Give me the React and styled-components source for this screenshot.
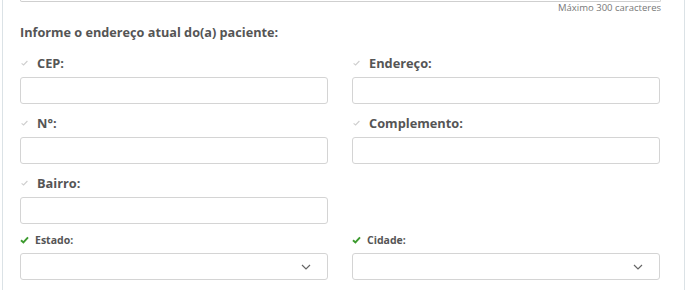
import React from 'react';
import styled, {createGlobalStyle} from 'styled-components';

const GlobalStyle = createGlobalStyle`
    html, body {margin: 0; padding: 0; background: #fff;}
    body {font-family: "Open Sans", "Liberation Sans", sans-serif;}
    * {box-sizing: border-box;}
`;

const Panel = styled.div`
    margin-left: 2px;
    width: 683px;
    height: 290px;
    border-left: 1px solid #dbe2e6;
    border-right: 1px solid #dbe2e6;
    padding: 0 23px 0 17px;
    overflow: hidden;
`;

const TextareaTail = styled.div`
    height: 2px;
    border: 1px solid #cfcfcf;
    border-top: none;
    border-radius: 0 0 4px 4px;
`;

const Counter = styled.div`
    text-align: right;
    font-size: 9.5px;
    line-height: 12px;
    color: #777;
`;

const Heading = styled.h5`
    margin: 8px 0 11px;
    font-size: 12.7px;
    line-height: 20px;
    font-weight: 700;
    color: #555;
`;

const Grid = styled.div`
    display: grid;
    grid-template-columns: 308px 308px;
    column-gap: 24px;
`;

const Field = styled.div`
    margin-bottom: 9px;
`;

const Label = styled.label`
    display: flex;
    align-items: center;
    gap: ${p => p.small ? '6px' : '9px'};
    margin-bottom: ${p => p.small ? '6px' : '4px'};
    padding-left: ${p => p.small ? '0' : '1px'};
    font-size: ${p => p.small ? '10.5px' : '12.8px'};
    line-height: ${p => p.small ? '14px' : '20px'};
    font-weight: 700;
    color: #555;
`;

const Input = styled.input`
    display: block;
    width: 100%;
    height: 27px;
    border: 1px solid #d4d4d4;
    border-radius: 3px;
    background: #fff;
    outline: none;
`;

const SelectBox = styled.div`
    display: flex;
    align-items: center;
    justify-content: flex-end;
    height: 27px;
    padding-right: 16px;
    border: 1px solid #d4d4d4;
    border-radius: 3px;
    background: #fff;
`;

const Check = ({valid}) => valid ? (
    <svg width="9" height="8" viewBox="0 0 9 8">
        <path d="M1 4.2 L3.4 6.5 L8 1.3" fill="none" stroke="#3c9a2e" strokeWidth="1.9"/>
    </svg>
) : (
    <svg width="7" height="6" viewBox="0 0 7 6">
        <path d="M0.6 3.3 L2.6 5 L6.4 1" fill="none" stroke="#cfcfcf" strokeWidth="1.1"/>
    </svg>
);

const Chevron = () => (
    <svg width="10" height="6" viewBox="0 0 10 6">
        <path d="M1 1 L5 5 L9 1" fill="none" stroke="#666" strokeWidth="1.2"/>
    </svg>
);

const TextField = ({label}) => (
    <Field>
        <Label><Check/>{label}</Label>
        <Input type="text"/>
    </Field>
);

const SelectField = ({label}) => (
    <Field>
        <Label small><Check valid/>{label}</Label>
        <SelectBox><Chevron/></SelectBox>
    </Field>
);

const App = () => {
    return (
        <>
            <GlobalStyle/>
            <Panel>
                <TextareaTail/>
                <Counter>Máximo 300 caracteres</Counter>
                <Heading>Informe o endereço atual do(a) paciente:</Heading>
                <Grid>
                    <TextField label="CEP:"/>
                    <TextField label="Endereço:"/>
                    <TextField label="N°:"/>
                    <TextField label="Complemento:"/>
                    <TextField label="Bairro:"/>
                    <div/>
                    <SelectField label="Estado:"/>
                    <SelectField label="Cidade:"/>
                </Grid>
            </Panel>
        </>
    )
};

export default App
